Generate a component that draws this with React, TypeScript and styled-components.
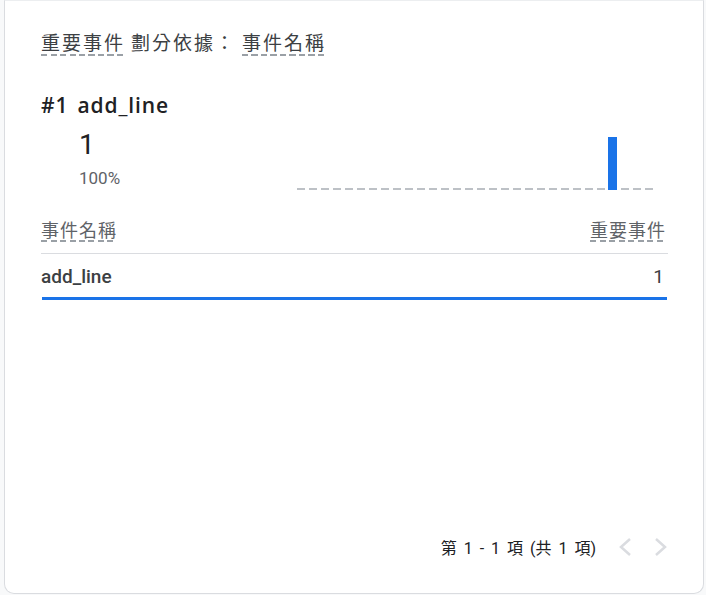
import React from "react";
import styled, { createGlobalStyle, css } from "styled-components";

const GlobalStyle = createGlobalStyle`
  html, body { margin: 0; padding: 0; background: #f8f9fa; }
  body { font-family: Roboto, "Noto Sans CJK TC", sans-serif; }
  *, *::before, *::after { box-sizing: border-box; }
`;

const dashedUnderline = css`
  background-image: repeating-linear-gradient(
    to right,
    #9aa0a6 0,
    #9aa0a6 6px,
    transparent 6px,
    transparent 9.5px
  );
  background-size: 100% 2px;
  background-position: left bottom;
  background-repeat: no-repeat;
`;

const Page = styled.div`
  width: 706px;
  height: 595px;
  padding: 0 2px 1px 4px;
  display: flex;
`;

const Card = styled.div`
  flex: 1;
  min-width: 0;
  background: #fff;
  border: 1px solid #dadce0;
  border-top: 1px solid #eceef0;
  border-radius: 0 0 10px 10px;
  padding: 30px 35px 34px 36px;
  display: flex;
  flex-direction: column;
`;

const Title = styled.div`
  font-family: "Noto Sans CJK TC", sans-serif;
  font-size: 19px;
  color: #3c4043;
  letter-spacing: 2px;
  display: flex;
  gap: 6px;
  line-height: 22px;
`;

const Dotted = styled.span`
  ${dashedUnderline};
  padding-bottom: 3px;
`;

const RankTitle = styled.div`
  margin-top: 36px;
  font-family: "Open Sans", Roboto, sans-serif;
  font-size: 21px;
  font-weight: 600;
  letter-spacing: 0.9px;
  color: #202124;
  display: flex;
  gap: 9px;
  line-height: 26px;
`;

const SummaryRow = styled.div`
  display: flex;
  align-items: flex-start;
`;

const Metric = styled.div`
  width: 255px;
  padding-left: 38px;
  display: flex;
  flex-direction: column;
`;

const BigNumber = styled.div`
  font-family: Roboto, sans-serif;
  font-size: 28px;
  color: #202124;
  line-height: 34px;
  margin-top: 10px;
`;

const Percent = styled.div`
  font-family: Roboto, sans-serif;
  font-size: 17px;
  color: #5f6368;
  line-height: 20px;
  margin-top: 6px;
`;

const Chart = styled.svg`
  display: block;
`;

const Table = styled.div`
  margin-top: 26px;
  display: flex;
  flex-direction: column;
`;

const HeadRow = styled.div`
  display: flex;
  justify-content: space-between;
  font-family: "Noto Sans CJK TC", sans-serif;
  font-size: 18px;
  letter-spacing: 1px;
  color: #5f6368;
  line-height: 22px;
  padding: 0 3px 11px 0;
  border-bottom: 1px solid #dadce0;
`;

const HeadCell = styled.span`
  ${dashedUnderline};
  padding-bottom: 2px;
  margin-right: -1px;
`;

const DataRow = styled.div`
  display: flex;
  justify-content: space-between;
  font-family: Roboto, sans-serif;
  font-size: 19px;
  color: #3c4043;
  padding: 11px 3px 8px 0;
  line-height: 24px;
  border-bottom: 3px solid #1a73e8;
  margin: 0 1px 0 1px;
`;

const RowName = styled.span`
  font-weight: 500;
  margin-left: -1px;
`;

const Spacer = styled.div`
  flex: 1;
`;

const Pager = styled.div`
  display: flex;
  justify-content: flex-end;
  align-items: center;
  gap: 22px;
  font-family: Roboto, "Noto Sans CJK TC", sans-serif;
  font-size: 16px;
  word-spacing: 3px;
  color: #202124;
`;

const PagerText = styled.span``;

const Chevron = styled.svg`
  display: block;
`;

export default function App() {
  return (
    <>
      <GlobalStyle />
      <Page>
        <Card>
          <Title>
            <Dotted>重要事件</Dotted>
            <span>劃分依據：</span>
            <Dotted>事件名稱</Dotted>
          </Title>
          <RankTitle>
            <span>#1</span>
            <span>add_line</span>
          </RankTitle>
          <SummaryRow>
            <Metric>
              <BigNumber>1</BigNumber>
              <Percent>100%</Percent>
            </Metric>
            <Chart width="360" height="74" viewBox="0 0 360 74">
              <line
                x1="1"
                y1="71"
                x2="358"
                y2="71"
                stroke="#bdc1c6"
                strokeWidth="2"
                strokeDasharray="8 4"
              />
              <rect x="312" y="19" width="9" height="53" fill="#1a73e8" />
            </Chart>
          </SummaryRow>
          <Table>
            <HeadRow>
              <HeadCell>事件名稱</HeadCell>
              <HeadCell>重要事件</HeadCell>
            </HeadRow>
            <DataRow>
              <RowName>add_line</RowName>
              <span>1</span>
            </DataRow>
          </Table>
          <Spacer />
          <Pager>
            <PagerText>第 1 - 1 項 (共 1 項)</PagerText>
            <Chevron width="14" height="20" viewBox="0 0 14 20">
              <path d="M12 2L3 10l9 8" fill="none" stroke="#dadce0" strokeWidth="2.5" />
            </Chevron>
            <Chevron width="14" height="20" viewBox="0 0 14 20">
              <path d="M2 2l9 8-9 8" fill="none" stroke="#dadce0" strokeWidth="2.5" />
            </Chevron>
          </Pager>
        </Card>
      </Page>
    </>
  );
}
